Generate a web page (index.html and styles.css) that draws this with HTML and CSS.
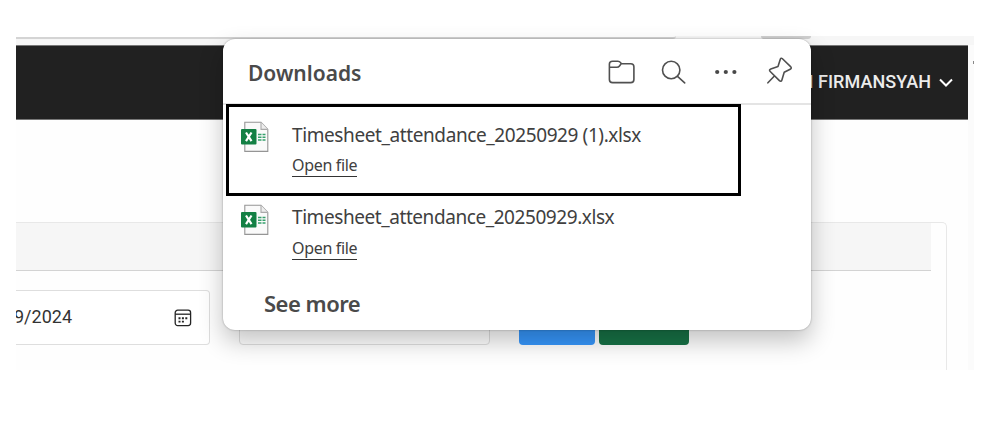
FILE: index.html
```html
<!DOCTYPE html>
<html lang="en">
<head>
<meta charset="utf-8">
<title>Downloads</title>
<link rel="stylesheet" href="styles.css">
</head>
<body>
<svg class="defs" aria-hidden="true">
  <symbol id="sheet" viewBox="0 0 28 32">
    <path d="M3.8 1.2H20l6.8 7.2v22H3.8z" fill="#fafafa" stroke="#959595" stroke-width="1.1"/>
    <path d="M20 1.2v7.2h6.8" fill="#ededed" stroke="#aaa" stroke-width="1.1"/>
    <path d="M17 13.5h3.5M21.5 13.5h3M17 16.3h3.5M21.5 16.3h3M17 19h3.5M21.5 19h3" stroke="#36a06c" stroke-width="1.5"/>
    <rect x="0" y="8" width="15.5" height="15.5" rx="1" fill="#138044"/>
    <path d="M5 11.5l5.5 8.6M10.5 11.5L5 20.1" stroke="#fff" stroke-width="2.2"/>
  </symbol>
</svg>
<div class="window">
  <div class="strip"><span class="address"></span><span class="tab"></span></div>
  <div class="view">
    <main class="page">
      <header class="navbar"><span class="user">N FIRMANSYAH</span>
        <svg class="chevron" viewBox="0 0 14 9"><path d="M1 1.5l6 6 6-6" fill="none" stroke="#fff" stroke-width="2"/></svg>
      </header>
      <section class="card">
        <div class="card-head"></div>
        <div class="form">
          <div class="field date"><span>9/2024</span>
            <svg class="calendar" viewBox="0 0 18 18" fill="none" stroke="#242424" stroke-width="1.3"><rect x="1.2" y="1.2" width="15.4" height="15.4" rx="2.5"/><path d="M1.2 5.2h15.4"/><path d="M4.5 9.2h9.5M4.5 12.6h6.5" stroke-width="1.9" stroke-dasharray="2 1.4"/></svg>
          </div>
          <div class="field second"></div>
          <div class="button blue"></div>
          <div class="button green"></div>
        </div>
      </section>
    </main>
    <div class="scrollbar"><i></i></div>
  </div>
  <aside class="popup">
    <div class="popup-head">
      <h1>Downloads</h1>
      <svg class="icons" viewBox="0 0 190 32" fill="none" stroke="#505050" stroke-width="1.6" stroke-linecap="round" stroke-linejoin="round">
        <path d="M4.6 5.2h5.2c1.3 0 2.1.4 2.8 1.4l.8 1.1h9.4c1.9 0 3.1 1.2 3.1 3.1v12.6c0 2-1.2 3.2-3.2 3.2H4.6c-2 0-3.2-1.2-3.2-3.2V8c0-1.8 1.2-2.8 3.2-2.8z M1.6 11.3h7.2c1.2 0 2-.3 2.7-1.3l1.6-2.2"/>
        <circle cx="63.2" cy="14" r="8.7"/><path d="M69.5 20.3l7.2 6.6"/>
        <g fill="#484848" stroke="none"><circle cx="109.2" cy="16" r="2.1"/><circle cx="117.8" cy="16" r="2.1"/><circle cx="126.4" cy="16" r="2.1"/></g>
        <path d="M174.2 2.5l8.4 8.1c1 .9.8 2-.4 2.6l-6 3-2.3 7.7c-.4 1.4-1.5 1.7-2.5.7l-9.2-9.1c-1-1-.8-2.1.6-2.6l7.2-2.5 2.4-7.3c.3-.9 1.1-1.2 1.8-.6z M166.4 20l-6.5 6.8"/>
      </svg>
    </div>
    <ul class="downloads">
      <li class="item marked"><svg class="file"><use href="#sheet"/></svg><div><p class="name">Timesheet_attendance_20250929 (1).xlsx</p><a class="open">Open file</a></div></li>
      <li class="item"><svg class="file"><use href="#sheet"/></svg><div><p class="name">Timesheet_attendance_20250929.xlsx</p><a class="open">Open file</a></div></li>
    </ul>
    <a class="more">See more</a>
  </aside>
</div>
</body>
</html>
```
FILE: styles.css
```css
* { box-sizing: border-box; }
body { margin: 0; padding: 36px 16px; background: #fff; overflow: hidden; font-family: "Noto Sans", sans-serif; }
h1, p, ul { margin: 0; padding: 0; }
.defs { position: absolute; width: 0; height: 0; }
.window { position: relative; width: 958px; height: 334px; background: #fefefe; }
.strip { height: 9px; background: #f6f6f6; display: flex; }
.address { width: 660px; height: 3px; background: #fff; border-bottom: 2px solid #d4d4d4; border-radius: 0 0 14px 0; }
.tab { width: 50px; height: 3px; margin-left: 85px; background: #cfcfcf; border-radius: 0 0 6px 6px; }
.view { display: flex; height: 325px; }
.page { width: 952px; overflow: hidden; }
.scrollbar { width: 6px; background: #fbfbfb; padding: 16px 0 0 5px; }
.scrollbar i { display: block; width: 1px; height: 3px; background: #888; }
.navbar { height: 75px; border: solid #777; border-width: 1px 0; background: #212121; display: flex; align-items: center; justify-content: flex-end; padding: 0 15px 2px 0; color: #ececec; }
.user { font: 500 18px/24px Roboto, sans-serif; letter-spacing: .05px; }
.chevron { width: 14px; height: 9px; margin-left: 8px; margin-top: 2px; }
.card { width: 931px; height: 180px; margin-top: 102px; border: solid #e8e8e8; border-width: 1px 1px 0 0; border-radius: 0 5px 0 0; }
.card-head { width: 915px; height: 48px; background: #f6f6f6; border-bottom: 1px solid #d3d3d3; }
.form { display: flex; padding-top: 19px; }
.field { height: 55px; border: 1px solid #dedede; border-radius: 4px; background: #fff; }
.date { width: 194px; border-left: 0; border-radius: 0 4px 4px 0; display: flex; align-items: center; justify-content: space-between; padding: 0 17px 2px 0; font: 18px/24px Roboto, sans-serif; color: #333; }
.date span { margin-left: -2px; }
.calendar { width: 18px; height: 18px; margin-top: 2px; }
.second { width: 251px; margin-left: 29px; }
.button { height: 55px; border-radius: 4px; }
.blue { width: 76px; margin-left: 29px; background: #3696fb; }
.green { width: 90px; margin-left: 4px; background: #177246; }
.popup { position: absolute; left: 207px; top: 3px; width: 588px; height: 291px; background: #fff; border-radius: 12px; box-shadow: 0 0 2px rgba(0,0,0,.35), 0 11px 24px rgba(0,0,0,.24); color: #404040; }
.popup-head { height: 66px; display: flex; align-items: center; justify-content: space-between; padding: 2px 13px 0 25px; border-bottom: 2px solid #e4e4e4; }
h1 { font-size: 21px; line-height: 28px; font-weight: 600; letter-spacing: 0; color: #4a4a4a; padding-top: 1px; }
.icons { width: 190px; height: 32px; }
.downloads { list-style: none; padding: 0 3px; margin-top: -1px; position: relative; }
.item { width: 515px; height: 83px; display: flex; padding: 7px 0 0 15px; }
.marked { height: 92px; border: 3px solid #000; padding: 14px 0 0 12px; }
.file { width: 28px; height: 32px; margin-right: 23px; }
.name { font-size: 19px; line-height: 28px; letter-spacing: -.43px; white-space: nowrap; }
.marked .name { letter-spacing: -.4px; }
.open { display: inline-block; font-size: 16px; line-height: 23px; letter-spacing: -.32px; border-bottom: 1px solid #333; margin-top: 4px; padding-top: 1px; height: 24px; }
.item:not(.marked) .open { margin-top: 5px; }
.item:not(.marked) .file { margin-top: 1px; }
.more { display: block; margin: 9px 0 0 41px; font-size: 22px; line-height: 30px; font-weight: 600; letter-spacing: -.5px; color: #4a4a4a; }
```
